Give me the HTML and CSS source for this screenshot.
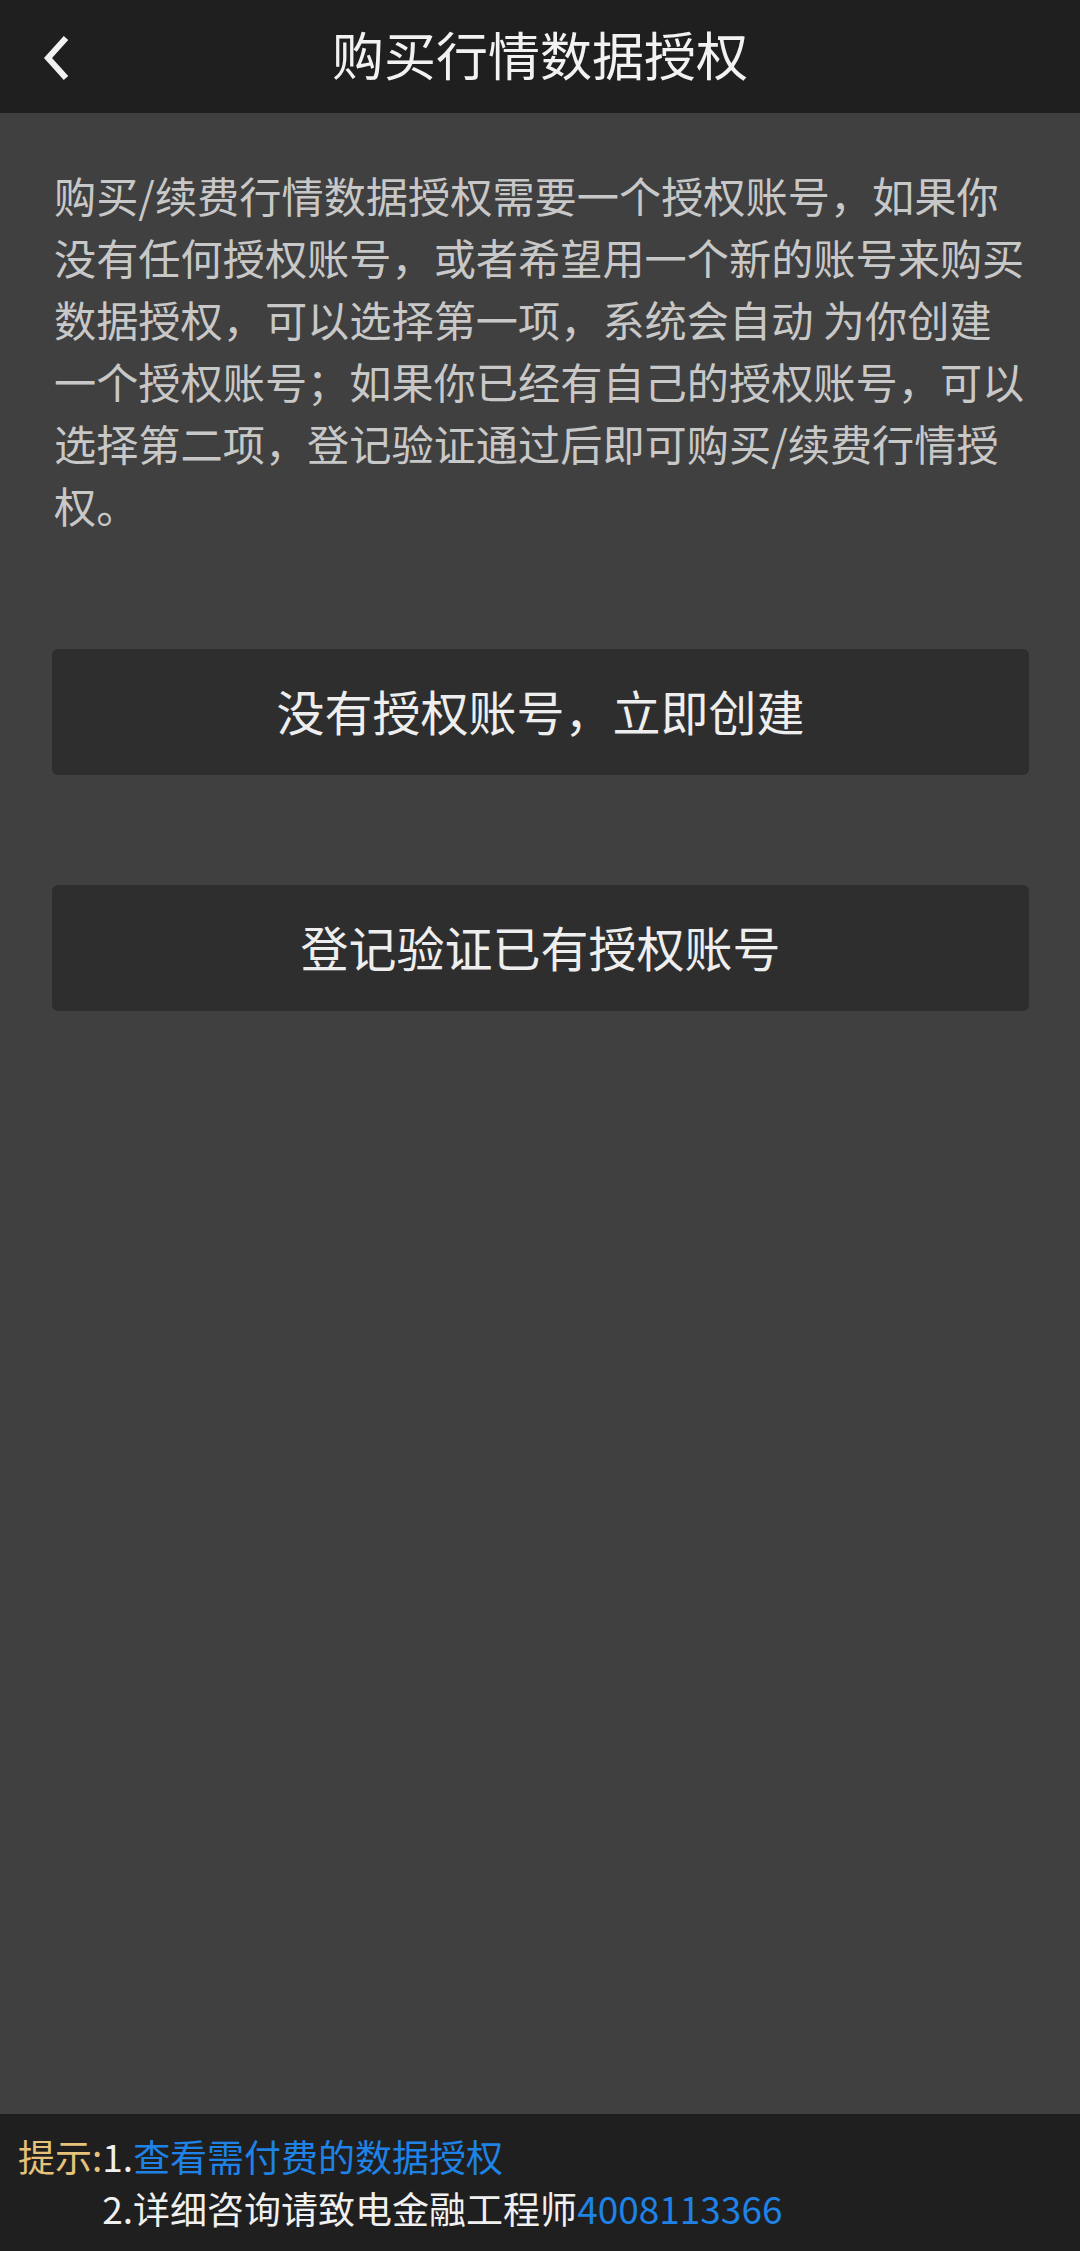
FILE: index.html
```html
<!DOCTYPE html>
<html lang="zh-CN">
<head>
<meta charset="utf-8">
<title>购买行情数据授权</title>
<link rel="stylesheet" href="styles.css">
</head>
<body>
<div class="page">
  <header class="topbar">
    <div class="back">
      <svg width="30" height="46" viewBox="0 0 30 46" aria-hidden="true">
        <path d="M23 3 L5 23 L23 43" fill="none" stroke="#f2f2f2" stroke-width="6" stroke-linecap="butt" stroke-linejoin="miter"/>
      </svg>
    </div>
    <h1 class="title">购买行情数据授权</h1>
    <div class="spacer"></div>
  </header>
  <main class="content">
    <p class="intro">购买/续费行情数据授权需要一个授权账号，如果你没有任何授权账号，或者希望用一个新的账号来购买数据授权，可以选择第一项，系统会自动 为你创建一个授权账号；如果你已经有自己的授权账号，可以选择第二项，登记验证通过后即可购买/续费行情授权。</p>
    <div class="actions">
      <button class="btn">没有授权账号，立即创建</button>
      <button class="btn">登记验证已有授权账号</button>
    </div>
  </main>
  <footer class="tips">
    <span class="tips-label">提示:</span>
    <div class="tips-list">
      <div class="tip">1.<span class="link">查看需付费的数据授权</span></div>
      <div class="tip">2.详细咨询请致电金融工程师<span class="link">4008113366</span></div>
    </div>
  </footer>
</div>
</body>
</html>
```

FILE: styles.css
```css
html, body {
  margin: 0;
  padding: 0;
  background: #404040;
}
body {
  font-family: "Noto Sans CJK SC", "Noto Sans", sans-serif;
}
.page {
  min-height: 2251px;
  display: flex;
  flex-direction: column;
}
.topbar {
  height: 113px;
  background: #1f1f1f;
  display: grid;
  grid-template-columns: 1fr auto 1fr;
  align-items: center;
}
.back {
  padding-left: 43px;
  display: flex;
  align-items: center;
  padding-top: 2px;
}
.title {
  margin: 0;
  font-size: 52px;
  font-weight: 400;
  color: #f2f2f2;
  line-height: 1;
  padding-bottom: 6px;
}
.content {
  flex: 1;
  padding: 51px 51px 0 52px;
  display: flex;
  flex-direction: column;
}
.intro {
  margin: 0;
  padding: 0 0 0 2px;
  font-size: 42.2px;
  line-height: 62px;
  color: #c8c8c8;
}
.actions {
  margin-top: 113px;
  display: flex;
  flex-direction: column;
  gap: 110px;
}
.btn {
  height: 126px;
  border: none;
  border-radius: 6px;
  background: #2e2e2e;
  color: #eeeeee;
  font-family: "Noto Sans CJK SC", "Noto Sans", sans-serif;
  font-size: 48px;
  padding: 0 0 4px;
}
.tips {
  background: #1f1f1f;
  height: 137px;
  box-sizing: border-box;
  padding: 16px 0 0 18px;
  display: flex;
  align-items: flex-start;
  font-size: 37px;
  line-height: 52px;
  color: #f0f0f0;
}
.tips-label {
  color: #e6c27a;
}
.link {
  color: #1e82e6;
}
```
